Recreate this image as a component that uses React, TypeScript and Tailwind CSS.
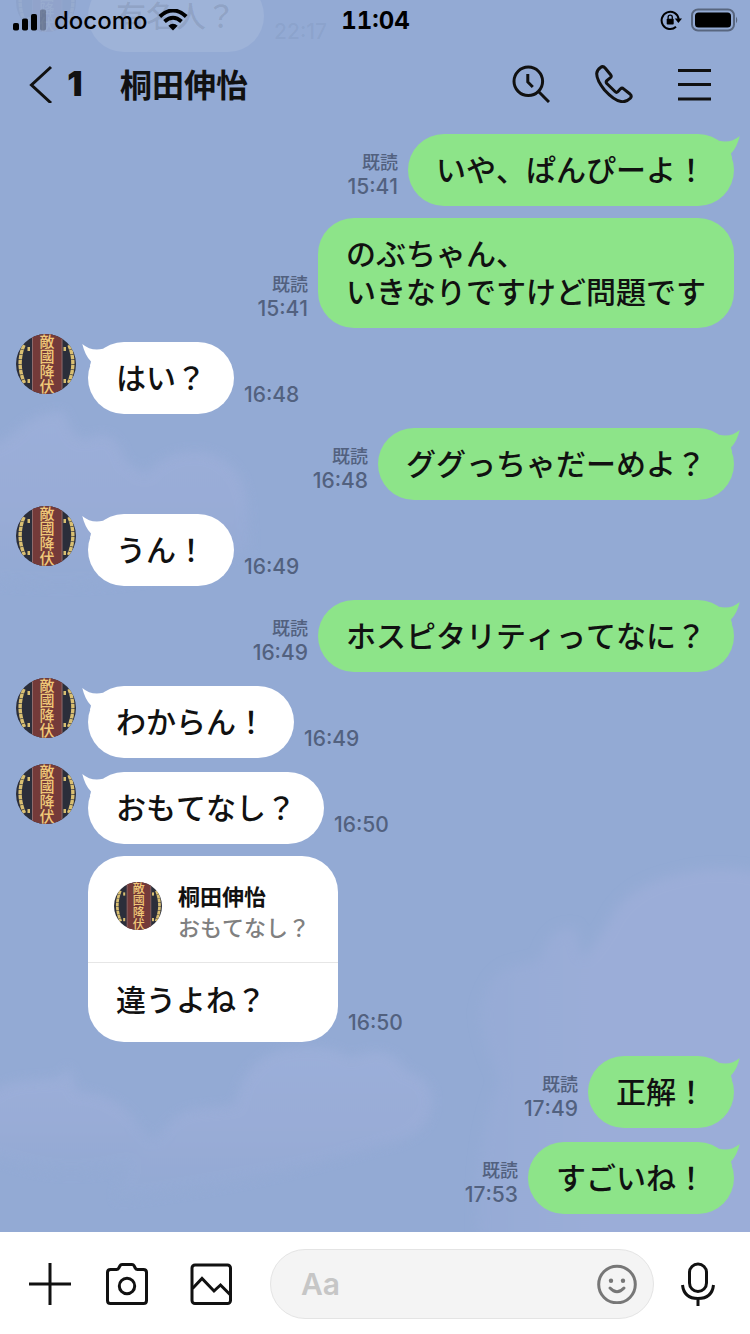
import { Fragment, type ReactNode } from "react";

const FONT = "font-['Inter','Noto_Sans_CJK_JP',sans-serif] [font-kerning:none]";

interface Message {
  id: number;
  mine?: boolean;
  lines: string[];
  time: string;
  tail?: boolean;
  quote?: { name: string; text: string };
}

const messages: Message[] = [
  { id: 1, mine: true, tail: true, lines: ["いや、ぱんぴーよ！"], time: "15:41" },
  { id: 2, mine: true, lines: ["のぶちゃん、", "いきなりですけど問題です"], time: "15:41" },
  { id: 3, tail: true, lines: ["はい？"], time: "16:48" },
  { id: 4, mine: true, tail: true, lines: ["ググっちゃだーめよ？"], time: "16:48" },
  { id: 5, tail: true, lines: ["うん！"], time: "16:49" },
  { id: 6, mine: true, tail: true, lines: ["ホスピタリティってなに？"], time: "16:49" },
  { id: 7, tail: true, lines: ["わからん！"], time: "16:49" },
  { id: 8, tail: true, lines: ["おもてなし？"], time: "16:50" },
  {
    id: 9,
    lines: ["違うよね？"],
    time: "16:50",
    quote: { name: "桐田伸怡", text: "おもてなし？" },
  },
  { id: 10, mine: true, tail: true, lines: ["正解！"], time: "17:49" },
  { id: 11, mine: true, tail: true, lines: ["すごいね！"], time: "17:53" },
];

function Avatar({ className }: { className: string }) {
  return (
    <svg viewBox="0 0 60 60" className={`shrink-0 rounded-full ${className}`} aria-hidden="true">
      <rect width="60" height="60" fill="#2b2e3a" />
      <rect x="16" width="30" height="60" fill="#743a39" />
      <path d="M16.5 0v60M46 0v60" stroke="#8d6a6c" strokeWidth="1" />
      <g fill="none" stroke="#d9bf72" strokeWidth="3.4" strokeDasharray="4.5 0.6">
        <path d="M8 11Q0 30 8.5 49" />
        <path d="M53 11Q61 30 52.5 49" />
      </g>
      <g fill="#d9bf72">
        <rect x="11.5" y="13" width="2.5" height="4" />
        <rect x="11.5" y="45" width="2.5" height="4" />
        <rect x="47.5" y="13" width="2.5" height="4" />
        <rect x="47.5" y="45" width="2.5" height="4" />
      </g>
      <text
        x="31"
        y="0"
        fill="#f0c878"
        fontSize="15"
        fontWeight="500"
        writingMode="vertical-rl"
        fontFamily="'Noto Sans CJK JP',sans-serif"
      >
        敵國降伏
      </text>
    </svg>
  );
}

function Tail({ mine }: { mine?: boolean }) {
  return (
    <svg
      viewBox="0 0 24 24"
      aria-hidden="true"
      className={
        mine
          ? "absolute top-0 -right-1.5 size-6 -scale-x-100 text-[#8de489]"
          : "absolute top-0 -left-1.5 size-6 text-white"
      }
    >
      <path fill="currentColor" d="M0.3 2Q9 9.5 21 6.8L24 8V24H8L9 19.5Q3 13.5 0.3 2Z" />
    </svg>
  );
}

function Bubble({ message }: { message: Message }) {
  const { mine, tail, lines, quote } = message;
  return (
    <div className={`relative rounded-[36px] text-[#111] ${mine ? "bg-[#8de489]" : "bg-white"}`}>
      {tail && <Tail mine={mine} />}
      {quote && (
        <div className="flex gap-4 border-b border-[#e6e6e6] pt-[26px] pr-7 pb-[18px] pl-[26px] text-[22px] leading-[31px]">
          <Avatar className="size-12" />
          <div>
            <p className="font-bold">{quote.name}</p>
            <p className="font-medium text-[#808080]">{quote.text}</p>
          </div>
        </div>
      )}
      <p className={`relative px-7 text-[30px] leading-[38px] font-medium ${quote ? "pt-[18px] pb-[23px]" : "py-[17px]"}`}>
        {lines.map((line, i) => (
          <Fragment key={line}>
            {i > 0 && <br />}
            {line}
          </Fragment>
        ))}
      </p>
    </div>
  );
}

function MessageRow({ message }: { message: Message }) {
  const { mine, tail, time } = message;
  const spacing = tail ? "mt-3.5" : "mt-3";
  const stamp = (
    <div className="self-end pb-[7px] text-[21px] leading-6 font-medium text-[#52617f]">
      {mine && <p className="text-right text-[18px]">既読</p>}
      <time>{time}</time>
    </div>
  );

  if (mine) {
    return (
      <li className={`flex justify-end gap-2.5 ${spacing}`}>
        {stamp}
        <Bubble message={message} />
      </li>
    );
  }
  return (
    <li className={`flex items-start ${spacing}`}>
      <div className="mr-3 w-[60px] shrink-0">{tail && <Avatar className="-mt-2 size-[60px]" />}</div>
      <Bubble message={message} />
      <div className="ml-2.5 self-end">{stamp}</div>
    </li>
  );
}

function Sky() {
  return (
    <svg
      viewBox="0 0 750 1232"
      preserveAspectRatio="none"
      aria-hidden="true"
      className="absolute inset-0 h-full w-full"
    >
      <defs>
        <filter id="soft" x="-10%" y="-10%" width="120%" height="120%">
          <feGaussianBlur stdDeviation="6" />
        </filter>
        <linearGradient id="cloud" x1="0" y1="0" x2="0" y2="1">
          <stop offset="0" stopColor="#9db0da" />
          <stop offset="0.5" stopColor="#9badd8" />
          <stop offset="1" stopColor="#93aad4" />
        </linearGradient>
        <linearGradient id="bank" x1="0" y1="0" x2="1" y2="0">
          <stop offset="0" stopColor="#96abd6" />
          <stop offset="0.4" stopColor="#9badd8" />
        </linearGradient>
      </defs>
      <g fill="url(#cloud)" filter="url(#soft)" opacity="0.85">
        <path d="M-20 450Q10 440 22 425Q40 412 64 411Q74 445 90 438Q115 425 125 460L145 475Q165 448 205 452Q248 462 248 515L250 550Q120 600 -20 580Z" />
        <path d="M-20 1100Q5 1080 30 1080L60 1078L68 1065L78 1092Q120 1092 142 1130Q160 1142 145 1160Q60 1190 -20 1150Z" />
        <path d="M115 1200Q130 1150 160 1135Q175 1108 205 1108L235 1105Q245 1050 300 1047Q335 1045 350 1058Q390 1040 405 1070Q440 1080 430 1115Q420 1140 380 1146Q250 1185 115 1200Z" />
      </g>
      <path
        fill="url(#bank)"
        filter="url(#soft)"
        d="M480 1010Q490 970 515 966L540 960Q550 925 575 928L582 958Q600 940 612 915Q630 885 675 875Q730 860 780 880V1260H480Q470 1150 500 1080Q480 1040 480 1010Z"
      />
    </svg>
  );
}

function StatusBar() {
  return (
    <div className="grid h-10 grid-cols-3 items-center pr-3 pl-[13px] text-black">
      <div className="flex items-center">
        <svg viewBox="0 0 34 22" className="h-[22px] w-[34px]" aria-label="Signal">
          <rect y="14" width="6" height="7.5" rx="1.8" />
          <rect x="9" y="9.5" width="6" height="12" rx="1.8" />
          <rect x="18" y="5" width="6" height="16.5" rx="1.8" />
          <rect x="27" y="0.5" width="6" height="21" rx="1.8" opacity="0.25" />
        </svg>
        <span className="ml-[7px] pt-0.5 text-[24px] leading-7 font-medium">docomo</span>
        <svg viewBox="0 0 30 22" className="ml-2.5 h-[22px] w-[30px]" fill="none" aria-label="Wi-Fi">
          <path d="M1.8 7.5Q15-4.5 28.2 7.5" stroke="#000" strokeWidth="4" />
          <path d="M6.5 12.5Q15 4.8 23.5 12.5" stroke="#000" strokeWidth="3.8" />
          <path d="M15 21.5L10.3 16.8Q15 12.8 19.7 16.8Z" fill="#000" />
        </svg>
      </div>
      <span className="pt-0.5 text-center text-[24px] leading-7 font-bold tabular-nums">11:04</span>
      <div className="flex items-center justify-end gap-2">
        <svg viewBox="0 0 22 22" className="size-[22px]" aria-label="Rotation lock">
          <path d="M16 17.8A8.6 8.6 0 1 1 18.7 10" fill="none" stroke="#000" strokeWidth="2" />
          <path d="M14.8 9.5H22L18.4 14Z" />
          <rect x="6.7" y="9.8" width="7" height="5.8" rx="0.8" />
          <path d="M8.1 10V8.2a2.1 2.1 0 0 1 4.2 0V10" fill="none" stroke="#000" strokeWidth="1.3" />
        </svg>
        <svg viewBox="0 0 48 24" className="h-6 w-12" aria-label="Battery">
          <rect x="2" y="1.5" width="42" height="21" rx="6" fill="none" stroke="#000" strokeOpacity="0.4" strokeWidth="2" />
          <rect x="5" y="4.5" width="36" height="15" rx="3.5" />
          <path d="M46 8.5q2.5 3.5 0 7Z" opacity="0.4" />
        </svg>
      </div>
    </div>
  );
}

function IconButton({ label, className, children }: { label: string; className?: string; children: ReactNode }) {
  return (
    <button type="button" aria-label={label} className={`shrink-0 ${className ?? ""}`}>
      {children}
    </button>
  );
}

function Header() {
  return (
    <header className="relative">
      <StatusBar />
      <div className="flex h-20 items-center pt-2 pr-[38px] pl-[29px] text-[#111]">
        <button type="button" className="flex items-center gap-3" aria-label="Back, 1 unread">
          <svg viewBox="0 0 24 38" className="h-[38px] w-6" fill="none" stroke="#111" strokeWidth="3">
            <path d="M22 2L2.5 20L22 38" />
          </svg>
          <span className="w-5 text-[34px] leading-9 font-black">1</span>
        </button>
        <h1 className="ml-[35px] pt-1 text-[32px] leading-10 font-bold">桐田伸怡</h1>
        <div className="ml-auto flex items-center gap-[45px]">
          <IconButton label="Search">
            <svg viewBox="0 0 38 38" className="size-[38px]" fill="none" stroke="#111" strokeWidth="3">
              <circle cx="16.3" cy="16.3" r="14.3" />
              <path d="M26.5 26.5L37 37" />
              <path d="M15.8 9v8l5 5" />
            </svg>
          </IconButton>
          <IconButton label="Call">
            <svg viewBox="0 0 38 38" className="size-[38px]" fill="none" stroke="#111" strokeWidth="3" strokeLinejoin="round">
              <path d="M5.5 2.5Q8 0.5 10.300 3.200L15.800 10Q16.800 11.500 15.500 12.700L12 15.500Q10.500 16.800 11.800 18.500L20 26.500Q21.500 28 22.800 26.700L25.500 23.800Q27 22.500 28.600 23.800L35 29Q37.200 31 35.300 33.300Q31 37.500 26 36.500Q19 35.500 9.500 25Q1.500 15 1.700 8.500Q2 5 5.500 2.500Z" />
            </svg>
          </IconButton>
          <IconButton label="Menu">
            <svg viewBox="0 0 34 38" className="h-[38px] w-[34px]" stroke="#111" strokeWidth="3">
              <path d="M0 5.5h33M0 19.5h33M0 34h33" />
            </svg>
          </IconButton>
        </div>
      </div>
    </header>
  );
}

function Composer() {
  return (
    <footer className="flex items-center bg-white pt-[17px] pr-[35px] pb-[15px] pl-[29px]">
      <IconButton label="Add">
        <svg viewBox="0 0 42 42" className="size-[42px]" stroke="#111" strokeWidth="3">
          <path d="M21 0v42M0 21h42" />
        </svg>
      </IconButton>
      <IconButton label="Camera" className="ml-[35px]">
        <svg viewBox="0 0 42 42" className="size-[42px]" fill="none" stroke="#111" strokeWidth="3" strokeLinejoin="round">
          <path d="M4.5 6.5H10.5Q12 6.5 12.8 5L14 2.7Q14.6 1.5 16 1.5H26Q27.4 1.5 28 2.7L29.2 5Q30 6.5 31.5 6.5H37.5Q40.5 6.5 40.5 9.5V37.5Q40.5 40.5 37.5 40.5H4.5Q1.5 40.5 1.5 37.5V9.5Q1.5 6.5 4.5 6.5Z" />
          <circle cx="21" cy="23" r="7.7" />
        </svg>
      </IconButton>
      <IconButton label="Photos" className="ml-[42px]">
        <svg viewBox="0 0 42 42" className="size-[42px]" fill="none" stroke="#111" strokeWidth="3">
          <rect x="2" y="2" width="38.5" height="38.5" rx="3" />
          <path d="M2.5 25.5L12 15.5L24 28L30.5 22L40 31.5" />
        </svg>
      </IconButton>
      <div className="ml-[38px] flex h-[70px] min-w-0 flex-1 items-center rounded-full border border-[#e4e4e4] bg-[#f4f4f4] pr-4 pl-[30px]">
        <input
          type="text"
          aria-label="Message"
          placeholder="Aa"
          className="min-w-0 flex-1 bg-transparent text-[30px] leading-9 font-semibold text-[#111] outline-none placeholder:text-[#c6c6c6]"
        />
        <IconButton label="Stickers">
          <svg viewBox="0 0 40 40" className="size-10" fill="none" stroke="#777" strokeWidth="3">
            <circle cx="20" cy="20.500" r="18.3" />
            <path d="M13 24Q20 31.5 27 24" strokeLinecap="round" />
            <circle cx="14" cy="16.8" r="2.2" fill="#777" stroke="none" />
            <circle cx="26" cy="16.8" r="2.2" fill="#777" stroke="none" />
          </svg>
        </IconButton>
      </div>
      <IconButton label="Voice message" className="ml-[27px]">
        <svg viewBox="0 0 34 44" className="h-11 w-[34px]" fill="none" stroke="#111" strokeWidth="3">
          <rect x="8.5" y="2" width="17" height="27.5" rx="8.5" />
          <path d="M1.5 23Q3 36.5 17 36.5Q31 36.5 32.5 23M17 36.5V44" />
        </svg>
      </IconButton>
    </footer>
  );
}

export default function App() {
  return (
    <div className={`flex min-h-screen flex-col bg-[#93aad4] ${FONT}`}>
      <main className="relative flex-1 overflow-hidden">
        <Sky />
        {/* older message scrolled up behind the header */}
        <div className="absolute -top-7 left-4 flex items-start" aria-hidden="true">
          <Avatar className="size-[60px] opacity-5" />
          <div className="mt-2 ml-3 rounded-[36px] bg-white/10 px-7 py-[17px] text-[30px] leading-[38px] font-medium text-[#111]/10">
            有名人？
          </div>
          <span className="mb-2 ml-2.5 self-end text-[21px] leading-6 font-medium text-[#52617f]/10">22:17</span>
        </div>
        <Header />
        <ul className="relative px-4 pb-[18px]">
          {messages.map((message) => (
            <MessageRow key={message.id} message={message} />
          ))}
        </ul>
      </main>
      <Composer />
    </div>
  );
}
